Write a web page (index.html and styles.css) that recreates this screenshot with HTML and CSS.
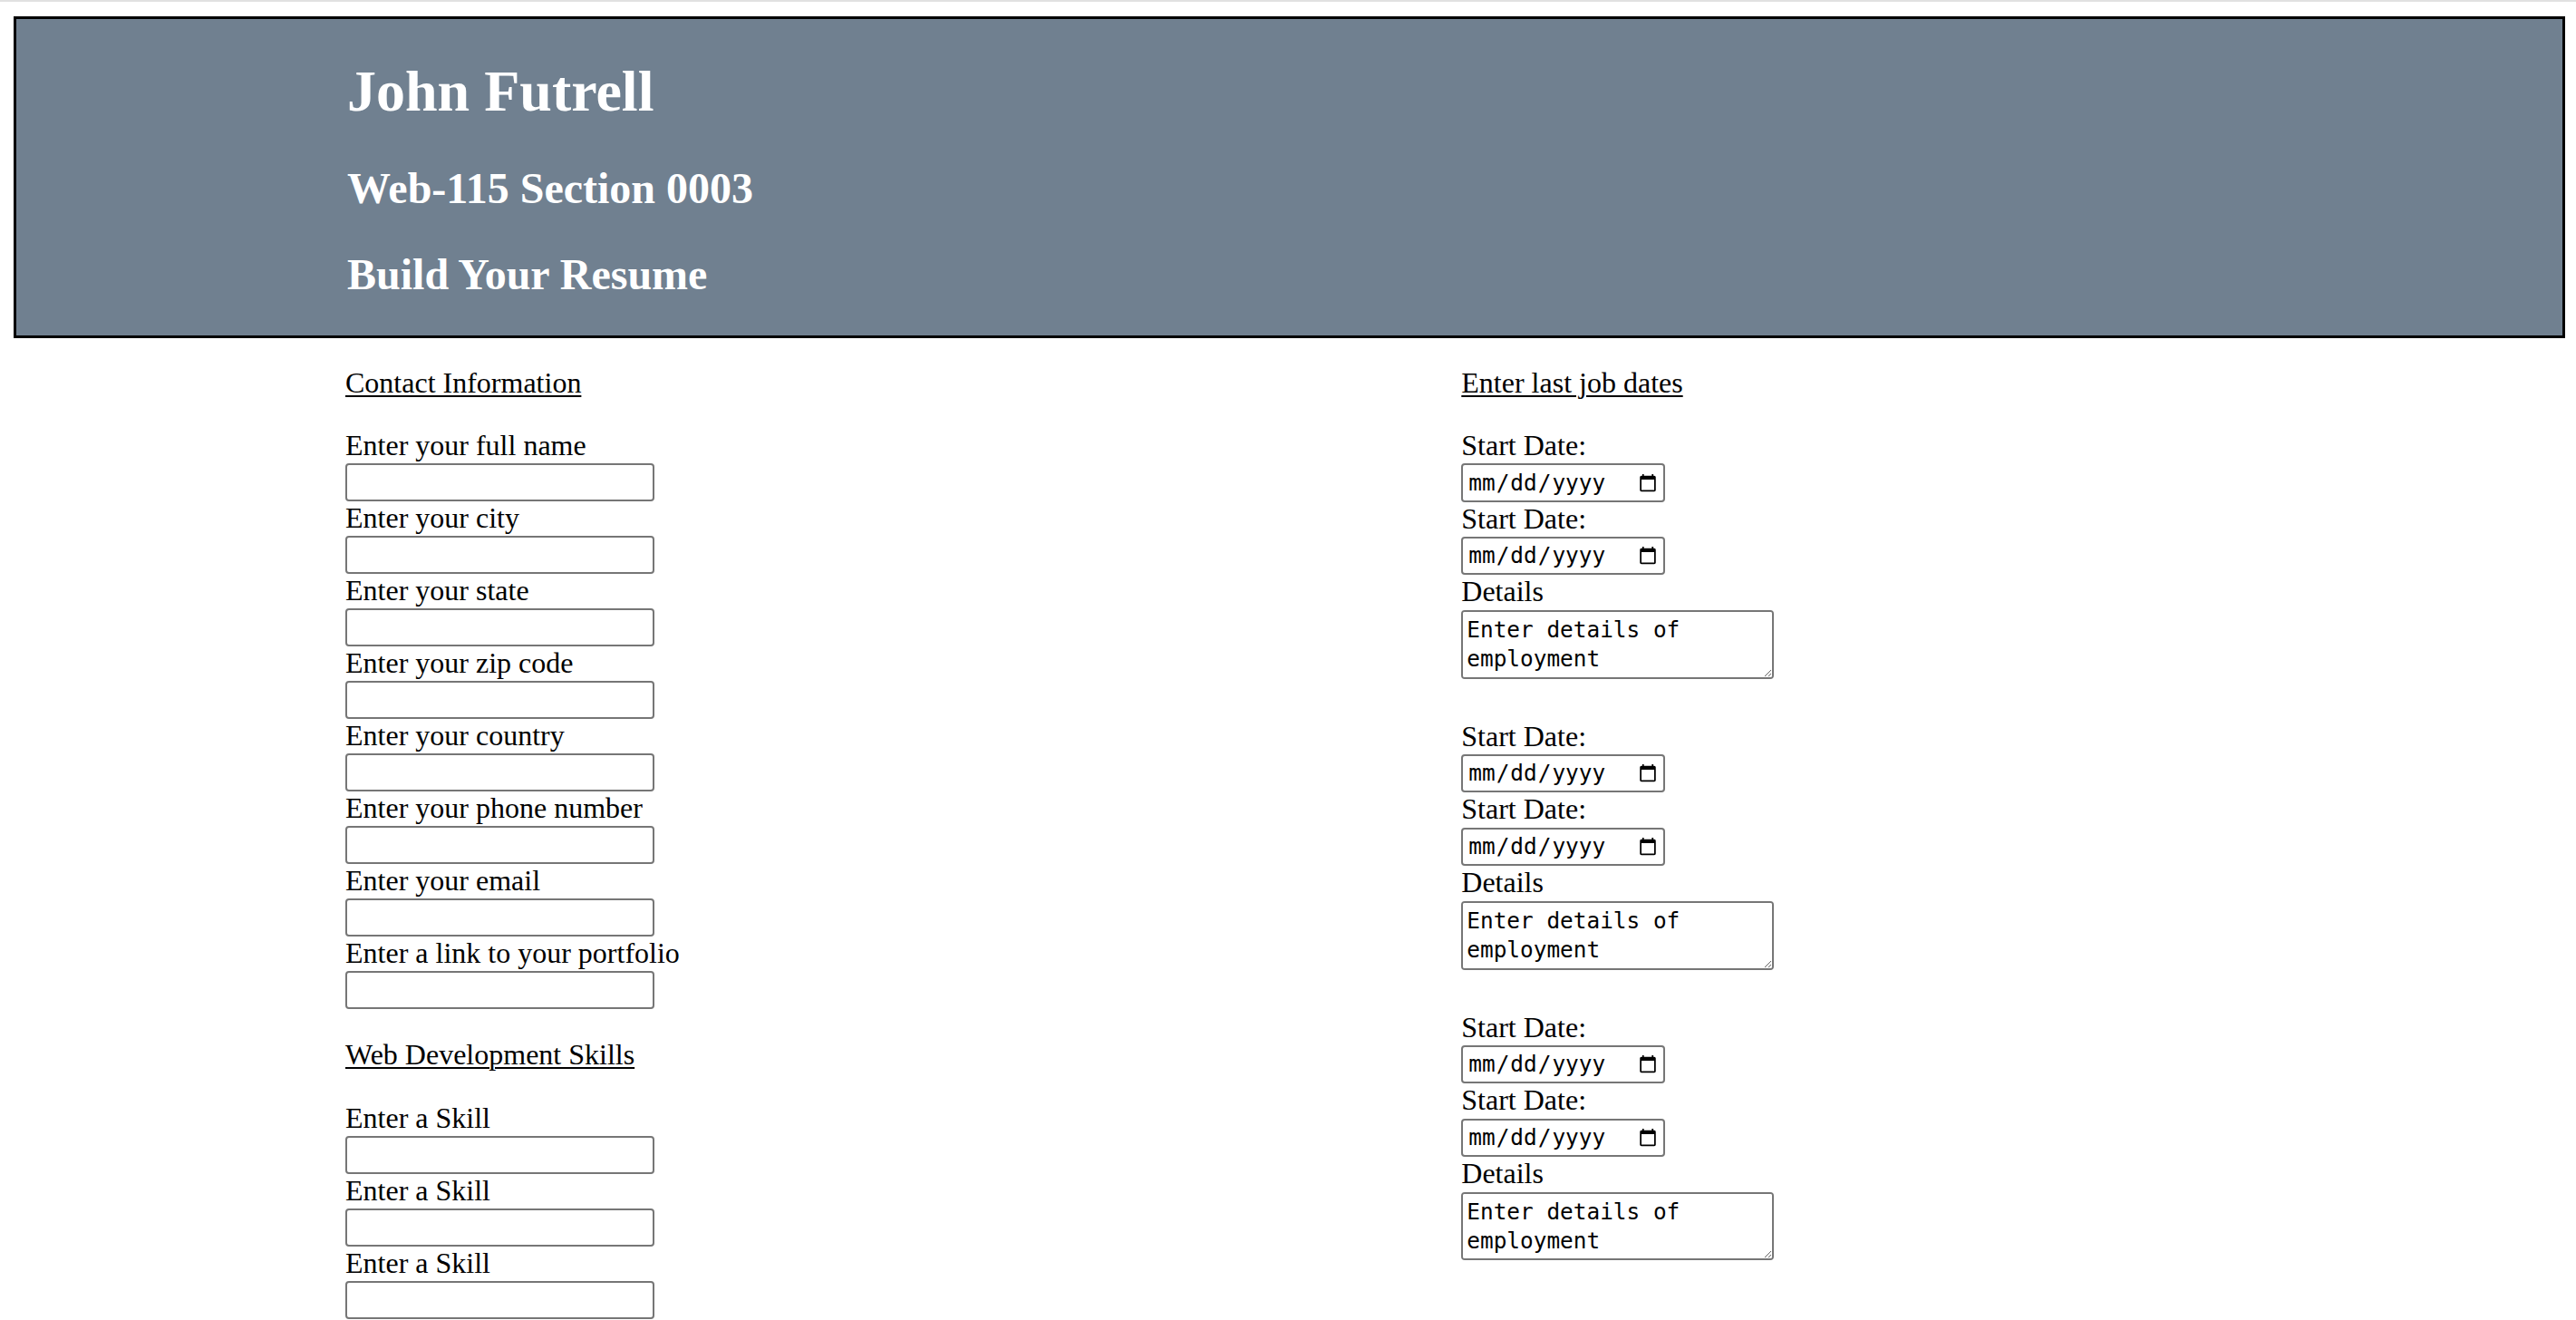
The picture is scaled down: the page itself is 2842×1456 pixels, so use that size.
FILE: index.html
```html
<!DOCTYPE html>
<html lang="en">
<head>
<meta charset="utf-8">
<title>John Futrell - Build Your Resume</title>
<link rel="stylesheet" href="styles.css">
</head>
<body>
<header class="banner">
  <h1 class="banner-name">John Futrell</h1>
  <h2 class="banner-sub">Web-115 Section 0003</h2>
  <h2 class="banner-sub">Build Your Resume</h2>
</header>
<main class="resume-form">
  <section class="col">
    <p class="section-title">Contact Information</p>
    <label class="field-label" for="fullname">Enter your full name</label>
    <input class="text-field" type="text" id="fullname">
    <label class="field-label" for="city">Enter your city</label>
    <input class="text-field" type="text" id="city">
    <label class="field-label" for="state">Enter your state</label>
    <input class="text-field" type="text" id="state">
    <label class="field-label" for="zip">Enter your zip code</label>
    <input class="text-field" type="text" id="zip">
    <label class="field-label" for="country">Enter your country</label>
    <input class="text-field" type="text" id="country">
    <label class="field-label" for="phone">Enter your phone number</label>
    <input class="text-field" type="text" id="phone">
    <label class="field-label" for="email">Enter your email</label>
    <input class="text-field" type="text" id="email">
    <label class="field-label" for="portfolio">Enter a link to your portfolio</label>
    <input class="text-field" type="text" id="portfolio">

    <p class="section-title">Web Development Skills</p>
    <label class="field-label" for="skill1">Enter a Skill</label>
    <input class="text-field" type="text" id="skill1">
    <label class="field-label" for="skill2">Enter a Skill</label>
    <input class="text-field" type="text" id="skill2">
    <label class="field-label" for="skill3">Enter a Skill</label>
    <input class="text-field last-field" type="text" id="skill3">
  </section>

  <section class="col">
    <p class="section-title">Enter last job dates</p>
    <div class="job">
      <label class="field-label" for="start1">Start Date:</label>
      <input class="date-field" type="date" id="start1">
      <label class="field-label" for="end1">Start Date:</label>
      <input class="date-field" type="date" id="end1">
      <label class="field-label" for="details1">Details</label>
      <textarea class="details-field" id="details1">Enter details of employment</textarea>
    </div>
    <div class="job">
      <label class="field-label" for="start2">Start Date:</label>
      <input class="date-field" type="date" id="start2">
      <label class="field-label" for="end2">Start Date:</label>
      <input class="date-field" type="date" id="end2">
      <label class="field-label" for="details2">Details</label>
      <textarea class="details-field" id="details2">Enter details of employment</textarea>
    </div>
    <div class="job">
      <label class="field-label" for="start3">Start Date:</label>
      <input class="date-field" type="date" id="start3">
      <label class="field-label" for="end3">Start Date:</label>
      <input class="date-field" type="date" id="end3">
      <label class="field-label" for="details3">Details</label>
      <textarea class="details-field" id="details3">Enter details of employment</textarea>
    </div>
  </section>
</main>
</body>
</html>
```

FILE: styles.css
```css
html {
  background: #ffffff;
}

body {
  margin: 0;
  border-top: 2px solid #e1e1e1;
  padding: 16px 12px 0 15px;
  font-family: "Liberation Serif", "Times New Roman", serif;
  font-size: 32px;
  line-height: 36.8px;
  color: #000000;
}

/* ---------- banner ---------- */
.banner {
  background: #708090;
  border: 3px solid #000000;
  padding-left: 365px;
  color: #ffffff;
}

.banner-name {
  font-size: 64px;
  line-height: 73.5px;
  font-weight: bold;
  margin: 42.6px 0;
}

.banner-sub {
  font-size: 48px;
  line-height: 55.2px;
  font-weight: bold;
  margin: 39.8px 0;
}

/* ---------- form columns ---------- */
.resume-form {
  display: grid;
  grid-template-columns: 1231.3px 1fr;
  padding-left: 366px;
}

.col {
  display: block;
}

.section-title {
  margin: 32.6px 0;
  text-decoration: underline;
  text-decoration-thickness: 2px;
  text-underline-offset: 3px;
}

.col > .section-title:first-child {
  margin-top: 31px;
}

.field-label {
  display: block;
}

.text-field,
.date-field,
.details-field {
  display: block;
  box-sizing: border-box;
  border: 2px solid #767676;
  border-radius: 4px;
  background: #ffffff;
  color: #000000;
  font-family: "DejaVu Sans Mono", "Liberation Mono", monospace;
  font-size: 24.4px;
  outline: none;
}

.text-field {
  width: 341px;
  height: 42px;
  margin: 1px 0 0.2px;
  padding: 2px 4px;
}

.last-field {
  margin-bottom: 0;
}

.date-field {
  width: 225px;
  height: 42.3px;
  margin: 1.5px 0 0;
  padding: 0 6px 0 5px;
  line-height: 38px;
}

.date-field::-webkit-calendar-picker-indicator {
  width: 22px;
  height: 22px;
  padding: 0;
  margin: 0;
}

.details-field {
  width: 345px;
  height: 75.3px;
  margin: 2.4px 0 0;
  padding: 4px;
  line-height: 32px;
  font-size: 24.4px;
}

.job {
  margin-bottom: 45.1px;
}
```
